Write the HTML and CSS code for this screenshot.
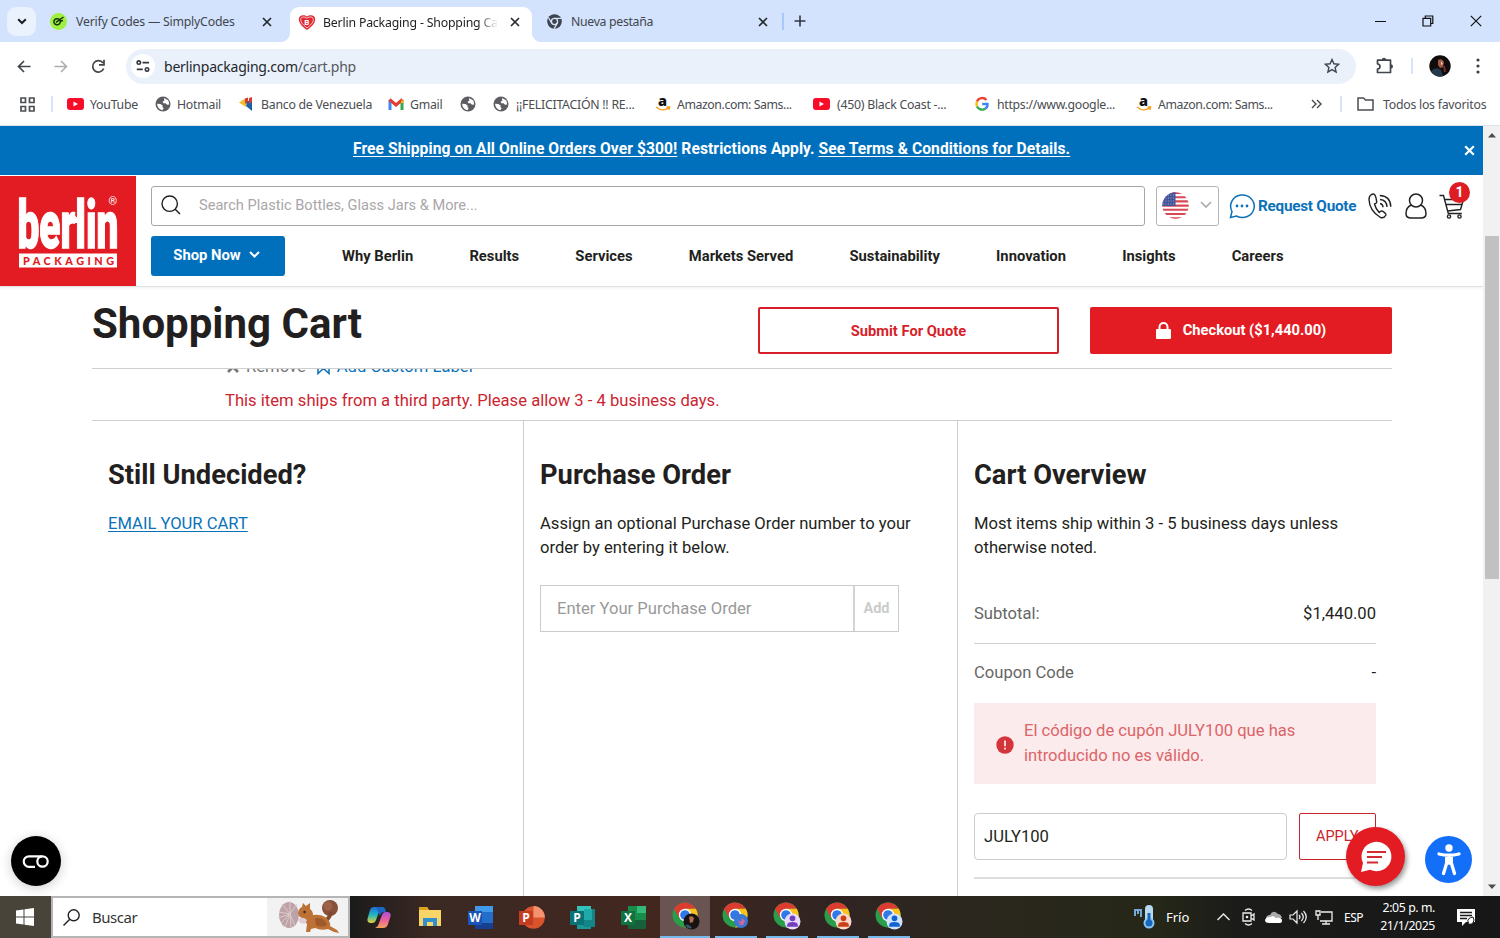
FILE: index.html
```html
<!DOCTYPE html>
<html lang="es">
<head>
<meta charset="utf-8">
<title>Berlin Packaging - Shopping Cart</title>
<link rel="stylesheet" href="styles.css">
</head>
<body>
<svg class="sprite" aria-hidden="true">
  <defs>
    <symbol id="close" viewBox="0 0 10 10"><path d="M1 1l8 8M9 1L1 9" stroke="currentColor" stroke-width="1.7" fill="none"/></symbol>
    <symbol id="globe" viewBox="0 0 16 16"><circle cx="8" cy="8" r="7.500" fill="#5b5d61"/><path d="M9 2l4.500 2.500.7 4-2.200.3-1.500-1.600H8.300L7.600 5.800 9.300 4.800zM2 7.800l3.500.2 2.300 1.800-.4 1.500 1.300.8-1.200 2.200C4.500 13.800 2.300 11.500 2 7.800z" fill="#fff"/></symbol>
    <symbol id="youtube" viewBox="0 0 17 12"><rect width="17" height="12" rx="3" fill="#f80c27"/><path d="M6.500 3.500v5l4.500-2.500z" fill="#fff"/></symbol>
    <symbol id="amazon" viewBox="0 0 16 16"><text x="3" y="9.500" font-family="Open Sans, sans-serif" font-weight="800" font-size="14.500" fill="#111">a</text><path d="M1 11c4 3.500 9 3.500 12.500.8M11.500 11.200l3-.4-.6 3" fill="none" stroke="#f5a11b" stroke-width="1.500"/></symbol>
    <symbol id="chrome" viewBox="0 0 26 26"><circle cx="13" cy="13" r="12.500" fill="#2a9d4b"/><path d="M2.200 6.700A12.500 12.500 0 0 1 23.800 6.700H13L7 16z" fill="#dd3a30"/><path d="M13 6.700h10.800A12.500 12.500 0 0 1 13 25.500l6-9z" fill="#fbc21d"/><circle cx="13" cy="13" r="6.200" fill="#fff"/><circle cx="13" cy="13" r="4.800" fill="#3279e8"/></symbol>
    <symbol id="person" viewBox="0 0 16 16"><circle cx="8" cy="5" r="2.700" fill="currentColor"/><path d="M3 13V11.500q0-3 5-3t5 3V13z" fill="currentColor"/></symbol>
  </defs>
</svg>

<header class="tabstrip">
  <div class="tab-search"><svg width="10" height="7" viewBox="0 0 10 7"><path d="M1.200 1.200L5 5l3.800-3.800" fill="none" stroke="#1c1d20" stroke-width="2"/></svg></div>
  <div class="tab tab-first">
    <svg width="17" height="17" viewBox="0 0 17 17"><circle cx="8.500" cy="8.500" r="8.500" fill="#9fef3f"/><path d="M8.500 6C5.500 5 3.500 7 4 9.500c.5 2.500 4 2.800 5.500 1.200C11 9 10.500 6.500 8.500 6zM6 9.300L13.500 4M9.500 8.500l3.500-1" fill="none" stroke="#173312" stroke-width="1.500"/></svg>
    <span class="tab-title">Verify Codes — SimplyCodes</span>
    <svg class="x" width="10" height="10"><use href="#close"/></svg>
  </div>
  <div class="tab tab-active">
    <svg width="18" height="17" viewBox="0 0 18 17"><path d="M9 16C5 13 .8 9.500.8 5.200.8 1 6 0 9 2.600 12 0 17.200 1 17.200 5.200 17.200 9.500 13 13 9 16z" fill="#df2933"/><path d="M9 14C6 11.500 2.700 9 2.700 5.500 2.700 2.500 6.500 2.200 9 4.300c2.500-2.100 6.300-1.800 6.300 1.200C15.300 9 12 11.500 9 14z" fill="none" stroke="#fff" stroke-width=".7"/><text x="6.300" y="10.500" font-family="Roboto" font-weight="700" font-size="8" fill="#fff">B</text></svg>
    <span class="tab-title fade">Berlin Packaging - Shopping Cart</span>
    <svg class="x" width="10" height="10"><use href="#close"/></svg>
  </div>
  <div class="tab tab-last">
    <svg width="15" height="15" viewBox="0 0 16 16"><circle cx="8" cy="8" r="7.800" fill="#3d434d"/><circle cx="8" cy="8" r="3.300" fill="none" stroke="#d3e3fd" stroke-width="1.400"/><path d="M8 4.600h7M5 9.700L1.500 3.800M11 9.700L7.600 15.600" stroke="#d3e3fd" stroke-width="1.300"/></svg>
    <span class="tab-title">Nueva pestaña</span>
    <svg class="x" width="10" height="10"><use href="#close"/></svg>
  </div>
  <i class="tab-divider"></i>
  <svg class="plus" width="12" height="12" viewBox="0 0 12 12"><path d="M6 .5v11M.5 6h11" stroke="#303741" stroke-width="1.600"/></svg>
  <div class="win-controls">
    <svg width="11" height="12" viewBox="0 0 11 12"><path d="M0 6.500h11" stroke="#111"/></svg>
    <svg width="12" height="12" viewBox="0 0 12 12"><path d="M1 3.300h7.700V11H1zM3.300 3V1h7.500v7.500H9" fill="none" stroke="#111" stroke-width="1.200"/></svg>
    <svg width="12" height="12" viewBox="0 0 12 12"><path d="M.8.800l10.400 10.400M11.200.8L.8 11.200" stroke="#111" stroke-width="1.200"/></svg>
  </div>
</header>

<div class="toolbar">
  <svg class="back" width="14" height="13" viewBox="0 0 14 13"><path d="M13.500 6.500H1.500M7 1L1.500 6.500 7 12" fill="none" stroke="#424549" stroke-width="1.700"/></svg>
  <svg class="fwd" width="14" height="13" viewBox="0 0 14 13"><path d="M.5 6.500h12M7 1l5.500 5.500L7 12" fill="none" stroke="#a9abae" stroke-width="1.500"/></svg>
  <svg class="reload" width="15" height="15" viewBox="0 0 15 15"><path d="M12.700 9.500A5.700 5.700 0 1 1 12 4M13 .8v5H8" fill="none" stroke="#424549" stroke-width="1.700"/></svg>
  <div class="omnibox">
    <span class="site-info"><svg width="14" height="12" viewBox="0 0 14 12"><g fill="none" stroke="#333940" stroke-width="1.600"><circle cx="2.800" cy="2.600" r="1.700"/><path d="M6.500 2.600H13M.8 9.400h6"/><circle cx="11" cy="9.400" r="1.700"/></g></svg></span>
    <span class="url">berlinpackaging.com<span>/cart.php</span></span>
    <svg class="star" width="16" height="16" viewBox="0 0 16 16"><path d="M8 1.500l1.900 4.300 4.700.5-3.500 3.100 1 4.600L8 11.600 3.900 14l1-4.600L1.400 6.300l4.700-.5z" fill="none" stroke="#41464c" stroke-width="1.400"/></svg>
  </div>
  <svg class="puzzle" width="18" height="18" viewBox="0 0 18 18"><path d="M1.500 3.200H14.500V15.500H1.500V12Q4 11.500 4 9.400T1.500 6.800z" fill="none" stroke="#41464c" stroke-width="1.700" stroke-linejoin="round"/><path d="M5.800 3a2.200 2.200 0 0 1 4.400 0zM14.800 7.200a2.200 2.200 0 0 1 0 4.400z" fill="#41464c"/></svg>
  <i class="tool-divider"></i>
  <svg class="avatar" width="22" height="22" viewBox="0 0 22 22"><circle cx="11" cy="11" r="10.700" fill="#100c0c"/><path d="M2 16q5-5 10-1l2 6q-8 2-12-5z" fill="#233a4c"/><path d="M9 5q4-2 6 2l-1 5-3 1-2-3z" fill="#a05b48"/><path d="M12 6l2 3-2 1z" fill="#f0c4ae"/><path d="M15 11l1 6" stroke="#732d24" stroke-width="2"/></svg>
  <svg class="dots" width="4" height="16" viewBox="0 0 4 16"><g fill="#3e4247"><circle cx="2" cy="2" r="1.600"/><circle cx="2" cy="8" r="1.600"/><circle cx="2" cy="14" r="1.600"/></g></svg>
</div>

<nav class="bookmarks">
  <svg class="apps" width="15" height="15" viewBox="0 0 15 15"><path d="M1 1h4.500v4.500H1zM9.500 1H14v4.500H9.500zM1 9.500h4.500V14H1zM9.500 9.500H14V14H9.500z" fill="none" stroke="#4b4e52" stroke-width="1.700"/></svg>
  <i></i>
  <a><svg width="17" height="12"><use href="#youtube"/></svg>YouTube</a>
  <a><svg width="16" height="16"><use href="#globe"/></svg>Hotmail</a>
  <a class="wide"><svg width="15" height="14" viewBox="0 0 15 14"><path d="M0 5.500L7 1v9z" fill="#f3bd27"/><path d="M6 1.500l3-1v6H6z" fill="#db3934"/><path d="M8 5l5-4v13l-6-5z" fill="#1b61a4"/><path d="M10 1l3-1v5l-3 2z" fill="#db3934"/></svg>Banco de Venezuela</a>
  <a><svg width="16" height="12" viewBox="0 0 16 12"><path d="M2 12V2" stroke="#4285f4" stroke-width="3"/><path d="M14 12V2" stroke="#34a853" stroke-width="3"/><path d="M1.500 1.500L8 7l6.500-5.500" fill="none" stroke="#e33c32" stroke-width="3"/><path d="M13 2.500h2.500V5H13z" fill="#fbbc04"/></svg>Gmail</a>
  <a><svg width="16" height="16"><use href="#globe"/></svg></a>
  <a class="wide"><svg width="16" height="16"><use href="#globe"/></svg>¡¡FELICITACIÓN !! RE...</a>
  <a class="tight"><svg width="16" height="16"><use href="#amazon"/></svg>Amazon.com: Sams...</a>
  <a class="wide"><svg width="17" height="12"><use href="#youtube"/></svg>(450) Black Coast -...</a>
  <a class="google"><svg width="14" height="14" viewBox="0 0 14 14"><g fill="none" stroke-width="2.400"><path d="M11.500 3A5.700 5.700 0 0 0 2 4.500" stroke="#ea4335"/><path d="M2 4.500a5.700 5.700 0 0 0 0 5" stroke="#fbbc05"/><path d="M2 9.500a5.700 5.700 0 0 0 8.500 2" stroke="#34a853"/><path d="M10.500 11.500A5 5 0 0 0 12.500 7H7.200" stroke="#4285f4"/></g></svg>https://www.google...</a>
  <a class="tight"><svg width="16" height="16"><use href="#amazon"/></svg>Amazon.com: Sams...</a>
  <svg class="more" width="11" height="10" viewBox="0 0 11 10"><path d="M1 1l4 4-4 4M6 1l4 4-4 4" fill="none" stroke="#44484d" stroke-width="1.400"/></svg>
  <i></i>
  <a class="all"><svg width="18" height="14" viewBox="0 0 18 14"><path d="M1 1h5.500l2 2H16v10H1z" fill="none" stroke="#4b4e52" stroke-width="1.500"/></svg>Todos los favoritos</a>
</nav>

<div class="viewport">
  <main class="page">
    <div class="promo">
      <p><u>Free Shipping on All Online Orders Over $300!</u> Restrictions Apply. <u>See Terms &amp; Conditions for Details.</u></p>
      <svg width="11" height="11" viewBox="0 0 11 11"><path d="M1.200 1.200l8.600 8.600M9.800 1.200L1.200 9.800" stroke="#fff" stroke-width="2.200"/></svg>
    </div>
    <div class="site-header">
      <div class="logo">
        <svg width="136" height="110" viewBox="0 0 136 110">
          <g transform="translate(17.500 72) scale(1 1.640)"><text x="0" y="0" textLength="101" lengthAdjust="spacingAndGlyphs" font-family="Roboto" font-weight="900" font-size="41" fill="#fff" stroke="#fff" stroke-width=".9">berlin</text></g>
          <path d="M66.500 42q5.500-7 11 0v5h-11z" fill="#fff"/>
          <text x="108.500" y="29" font-family="Roboto" font-size="11" fill="#fff">®</text>
          <rect x="19" y="77.500" width="98" height="14" fill="#fff"/>
          <text x="23" y="88.500" textLength="91" font-family="Lato" font-weight="900" font-size="10.800" fill="#df1b23">PACKAGING</text>
        </svg>
      </div>
      <div class="header-rows">
        <div class="row-search">
          <div class="search"><svg width="20" height="20" viewBox="0 0 20 20"><circle cx="8.700" cy="8.700" r="7.700" fill="none" stroke="#222" stroke-width="1.400"/><path d="M14 14l5 5" stroke="#222" stroke-width="1.500"/></svg><span>Search Plastic Bottles, Glass Jars &amp; More...</span></div>
          <div class="country">
            <svg width="27" height="27" viewBox="0 0 27 27"><clipPath id="disc"><circle cx="13.500" cy="13.500" r="13.200"/></clipPath><g clip-path="url(#disc)"><path fill="#fff" d="M0 0h27v27H0z"/><path d="M0 1h27M0 5.200h27M0 9.400h27M0 13.600h27M0 17.800h27M0 22h27M0 26.200h27" stroke="#d94855" stroke-width="2.100"/><path d="M0 0h13.500v14H0z" fill="#46559a"/><path d="M1 3h12M1 6h12M1 9h12M1 12h12" stroke="#aab2d6" stroke-width=".8" stroke-dasharray="1 1.500"/></g></svg>
            <svg width="12" height="8" viewBox="0 0 12 8"><path d="M1 1l5 5 5-5" fill="none" stroke="#aaa" stroke-width="1.600"/></svg>
          </div>
          <div class="quote"><svg width="26" height="26" viewBox="0 0 26 26"><path d="M1.500 24.500l1.500-6A11.800 11.300 0 1 1 7.500 23z" fill="none" stroke="#0b72b9" stroke-width="1.500"/><g fill="#0b72b9"><circle cx="8" cy="13" r="1.400"/><circle cx="13" cy="13" r="1.400"/><circle cx="18" cy="13" r="1.400"/></g></svg><b>Request Quote</b></div>
          <svg class="phone" width="24" height="26" viewBox="0 0 24 26"><g fill="none" stroke="#222" stroke-width="1.400" stroke-linejoin="round"><path d="M3.500 1.500Q1 3 1 6.500 1.500 18 12.500 24.500q3.500 1.200 5.500-2.500.3-1.200-3.500-3.800-1.500-.7-3.300 1.300Q7.500 15.500 6.500 11q2.500-1 2.200-2Q8 2.500 6.200 1.200 5 .8 3.500 1.500z"/><path d="M12 10.500q3 .5 3 3.700M12 6.500q6.800.5 7 7.500M11.800 2.500q10.700.5 11 11.200"/></g></svg>
          <svg class="user" width="22" height="26" viewBox="0 0 22 26"><g fill="none" stroke="#222" stroke-width="1.500"><circle cx="11" cy="7.500" r="6.500"/><path d="M6.200 12Q1 14.500 1 20.500 1 25 6 25h10q5 0 5-4.500 0-6-5.200-8.500"/></g></svg>
          <div class="cart"><svg width="26" height="25" viewBox="0 0 26 25"><g fill="none" stroke="#222" stroke-width="1.400"><path d="M.5 1.500h4l4.800 18h13.500M5.500 5.500h19l-3 10L8.500 17M7 10.500h16"/><circle cx="10" cy="22.500" r="1.600"/><circle cx="20.500" cy="22.500" r="1.600"/></g></svg><b>1</b></div>
        </div>
        <div class="row-nav">
          <div class="shop">Shop Now <svg width="11" height="8" viewBox="0 0 11 8"><path d="M1 1l4.500 4.500L10 1" fill="none" stroke="#fff" stroke-width="2"/></svg></div>
          <nav><a>Why Berlin</a><a>Results</a><a>Services</a><a>Markets Served</a><a>Sustainability</a><a>Innovation</a><a>Insights</a><a>Careers</a></nav>
        </div>
      </div>
    </div>
    <div class="content">
      <div class="title-row">
        <h1>Shopping Cart</h1>
        <div class="btn outline">Submit For Quote</div>
        <div class="btn solid"><svg width="15" height="17" viewBox="0 0 15 17"><path d="M3.500 8V5a4 4 0 0 1 8 0v3" fill="none" stroke="#fff" stroke-width="2"/><rect y="7" width="15" height="10" rx="1" fill="#fff"/></svg>Checkout ($1,440.00)</div>
      </div>
      <div class="item">
        <div class="item-actions">
          <svg class="rm" width="12" height="12" viewBox="0 0 12 12"><path d="M1 1l10 10M11 1L1 11" stroke="#777" stroke-width="2.800"/></svg><span class="remove">Remove</span>
          <svg class="tag" width="13" height="17" viewBox="0 0 13 17"><path d="M1 1h11v14.500l-5.500-5-5.500 5z" fill="none" stroke="#0b72b9" stroke-width="1.500"/></svg><span class="label">Add Custom Label</span>
        </div>
        <p>This item ships from a third party. Please allow 3 - 4 business days.</p>
      </div>
      <div class="columns">
        <section class="c1"><h2>Still Undecided?</h2><a class="email">EMAIL YOUR CART</a></section>
        <section class="c2"><h2>Purchase Order</h2><p>Assign an optional Purchase Order number to your<br>order by entering it below.</p>
          <div class="po"><span>Enter Your Purchase Order</span><b>Add</b></div></section>
        <section class="c3"><h2>Cart Overview</h2><p>Most items ship within 3 - 5 business days unless<br>otherwise noted.</p>
          <div class="line subtotal"><span>Subtotal:</span><em>$1,440.00</em></div>
          <div class="line coupon"><span>Coupon Code</span><em>-</em></div>
          <div class="error"><svg width="18" height="18" viewBox="0 0 18 18"><circle cx="9" cy="9" r="8.700" fill="#d5353a"/><path d="M9 4.500v5.700M9 11.700v1.800" stroke="#fff" stroke-width="1.600"/></svg><span>El código de cupón JULY100 que has<br>introducido no es válido.</span></div>
          <div class="apply-row"><span class="code">JULY100</span><span class="apply">APPLY</span></div>
          <div class="end-rule"></div>
        </section>
      </div>
    </div>
  </main>
  <aside class="scrollbar">
    <svg width="8" height="5" viewBox="0 0 8 5"><path d="M4 0l4 4.500H0z" fill="#4c4c4c"/></svg>
    <div class="thumb"></div>
    <svg class="down" width="8" height="5" viewBox="0 0 8 5"><path d="M4 5L0 .5h8z" fill="#4c4c4c"/></svg>
  </aside>
  <div class="float cookie"><svg width="26" height="13" viewBox="0 0 26 13"><g fill="none" stroke="#fff" stroke-width="2.200"><path d="M12 11.800H6a5.200 5.200 0 0 1 0-10.500h13"/><circle cx="19.500" cy="6.500" r="5.200"/></g></svg></div>
  <div class="float chat"><svg width="32" height="32" viewBox="0 0 32 32"><path d="M1 31l2-9A15 14.700 0 1 1 10 28.800z" fill="#fff"/><path d="M7 11h19M7 16h15M7 21.500h11" stroke="#d32930" stroke-width="2.200"/></svg></div>
  <div class="float access"><svg width="24" height="32" viewBox="0 0 24 32"><circle cx="12" cy="4" r="3.700" fill="#fff"/><path d="M2 10q10 2.500 20 0M12 12v7M9.700 12v7L6.500 29.500M14.300 12v7l3.200 10.500" fill="none" stroke="#fff" stroke-width="3.300" stroke-linecap="round"/></svg></div>
</div>

<footer class="taskbar">
  <div class="start"><svg width="18" height="18" viewBox="0 0 18 18"><path d="M0 2.500L7.500 1.500v7H0zM8.500 1.300L18 0v8.500H8.500zM0 9.500h7.500v7L0 15.500zM8.500 9.500H18V18L8.500 16.700z" fill="#fff"/></svg></div>
  <div class="find">
    <svg class="lens" width="17" height="17" viewBox="0 0 17 17"><circle cx="10.700" cy="6.300" r="5.500" fill="none" stroke="#222" stroke-width="1.400"/><path d="M6.500 10.500l-6 6" stroke="#222" stroke-width="1.500"/></svg><span>Buscar</span>
    <div class="highlight"><svg width="62" height="34" viewBox="0 0 62 34"><ellipse cx="11" cy="15" rx="10" ry="13" fill="#bda3a8"/><path d="M12 14L4 4M12 14L1 12M12 14L3 23M12 14l0-13M12 14l1 13M12 14l7-10M12 14L0 18M12 14l5 12M12 14L7 27" stroke="#dccaca" stroke-width="1"/><circle cx="52" cy="8" r="8" fill="#875039"/><circle cx="50" cy="6" r="4.500" fill="#9c6149"/><path d="M53 12q-1 6-6 9" fill="none" stroke="#80492c" stroke-width="4"/><path d="M20 13q1-5 4-6l1-4 3 3 4-3v6q3 2 3 6 7-1 12 2 6 4 5 9l7 4 2 3-5-1-6-3q-7 2-13-1l-4 1-1 3h-4l1-8-4-6q-4 0-5-5z" fill="#bd7135"/><path d="M37 18q10-1 12 7-6 3-11 0z" fill="#9f592a"/><circle cx="26.500" cy="12" r="1.200" fill="#34242a"/><path d="M20 19q5-3 9 1l-2 4-5-1z" fill="#e1cbd7"/></svg></div>
  </div>
  <div class="apps-row">
    <div><svg width="24" height="23" viewBox="0 0 24 23"><defs><linearGradient id="cp1" x2="0" y2="1"><stop stop-color="#226bd8"/><stop offset=".5" stop-color="#20b7be"/><stop offset="1" stop-color="#e7cf35"/></linearGradient><linearGradient id="cp2" x2="0" y2="1"><stop stop-color="#a951d8"/><stop offset=".5" stop-color="#ee5e9b"/><stop offset="1" stop-color="#f4a35d"/></linearGradient></defs><path d="M7 1h9q-3 1-4 5l-3 8q-1 3-4 3H3q-4-1-2-6L3 4q1-3 4-3z" fill="url(#cp1)"/><path d="M18 6h3q4 1 2 6l-2 6q-1 4-5 4H8q3-1 4-5l3-8q1-3 3-3z" fill="url(#cp2)"/><path d="M9 1h7q2 0 3 5h-2q-3 0-4 4" fill="#1b65c5"/></svg></div>
    <div><svg width="24" height="20" viewBox="0 0 24 20"><path d="M1 0h8l2 3h12v16H1z" fill="#f9d568"/><path d="M1 0h8l2 3H1z" fill="#dba322"/><path d="M5 19v-8h14v8h-4v-4H9v4z" fill="#318fce"/></svg></div>
    <div><svg width="26" height="23" viewBox="0 0 26 23"><path d="M7 0h18v23H7z" fill="#236ecb"/><path d="M7 0h18v6H7z" fill="#3f9be9"/><path d="M7 17h18v6H7z" fill="#163f91"/><path d="M0 5h14v14H0z" fill="#1954b6"/><text x="1.200" y="15.800" class="office-letter">W</text></svg></div>
    <div><svg width="26" height="23" viewBox="0 0 26 23"><circle cx="14.500" cy="11.500" r="11.300" fill="#d9532d"/><path d="M14.500 0a11.500 11.500 0 0 1 11.400 11.500H14.500z" fill="#f59270"/><path d="M0 5h14v14H0z" fill="#c43d21"/><text x="3.300" y="15.800" class="office-letter">P</text></svg></div>
    <div><svg width="26" height="23" viewBox="0 0 26 23"><path d="M7 0h14v23H7z" fill="#1a9697"/><path d="M7 0h14v7H7z" fill="#32c2ba"/><path d="M14 3h11v18H14z" fill="#138487"/><path d="M14 3h8v11h-8z" fill="#1faaa9"/><path d="M0 5h14v14H0z" fill="#0b7277"/><text x="3.300" y="15.800" class="office-letter">P</text></svg></div>
    <div><svg width="26" height="23" viewBox="0 0 26 23"><path d="M7 0h18v23H7z" fill="#198b4b"/><path d="M16 0h9v7h-9z" fill="#34ba78"/><path d="M7 14h18v9H7z" fill="#176039"/><path d="M0 5h14v14H0z" fill="#117241"/><text x="3" y="15.800" class="office-letter">X</text></svg></div>
    <div class="run current"><svg width="28" height="28" viewBox="0 0 28 28"><use href="#chrome" width="26" height="26"/><circle cx="19.500" cy="19.500" r="8" fill="#171112"/><path d="M17 15q3-2 5 1l-1 4-3 1z" fill="#b06b52"/><path d="M13 23q4-2 7 3-4 2-7-3z" fill="#385064"/></svg></div>
    <div class="run"><svg width="28" height="28" viewBox="0 0 28 28"><use href="#chrome" width="26" height="26"/><circle cx="19" cy="19" r="7" fill="#3977d4"/><path d="M16 18l3 2 1-4 3 3-2 4h-3z" fill="#d5659c"/></svg></div>
    <div class="run"><svg width="28" height="28" viewBox="0 0 28 28"><use href="#chrome" width="26" height="26"/><circle cx="19.500" cy="19.500" r="8" fill="#e9dafb"/><g color="#7140bd"><use href="#person" x="11" y="11" width="17" height="17"/></g></svg></div>
    <div class="run"><svg width="28" height="28" viewBox="0 0 28 28"><use href="#chrome" width="26" height="26"/><circle cx="19.500" cy="19.500" r="8" fill="#f8d8cb"/><g color="#cc3f16"><use href="#person" x="11" y="11" width="17" height="17"/></g></svg></div>
    <div class="run"><svg width="28" height="28" viewBox="0 0 28 28"><use href="#chrome" width="26" height="26"/><circle cx="19.500" cy="19.500" r="8" fill="#d1e4ff"/><g color="#1265cf"><use href="#person" x="11" y="11" width="17" height="17"/></g></svg></div>
  </div>
  <div class="tray">
    <svg class="temp" width="21" height="24" viewBox="0 0 21 24"><path d="M0 5h8M1 5v6M4 5v4M7 5v7" stroke="#75a9d7" stroke-width="2"/><path d="M15 4v13" stroke="#b6d9f1" stroke-width="8" stroke-linecap="round"/><circle cx="15" cy="18" r="5.500" fill="#8bc7f0"/><path d="M15 8v10" stroke="#1668bd" stroke-width="3"/><circle cx="15" cy="18" r="3.500" fill="#1668bd"/></svg>
    <span class="cold">Frío</span>
    <svg class="up" width="13" height="8" viewBox="0 0 13 8"><path d="M.5 7l6-6 6 6" fill="none" stroke="#eee" stroke-width="1.400"/></svg>
    <svg class="meet" width="13" height="18" viewBox="0 0 13 18"><path d="M3 2.500q3.500-3 7 0M3 15.500q3.500 3 7 0M1 5h8v8H1zM9 8l3-2v6l-3-2" fill="none" stroke="#eee" stroke-width="1.300"/><circle cx="5" cy="9" r="1.300" fill="#eee"/></svg>
    <svg class="cloud" width="17" height="12" viewBox="0 0 17 12"><path d="M1 8q0-4 4-4 3-6 8-1 3 0 4 4z" fill="#aaa"/><path d="M0 9q1-3 5-3l3-1 3 2q6-1 6 3 0 2-3 2H4q-4 0-4-3z" fill="#fff"/></svg>
    <svg class="sound" width="18" height="14" viewBox="0 0 18 14"><path d="M1 5h3l4-4v12L4 9H1zM10 5q2 2 0 4M12.300 3q4 4 0 8M14.500 1q5.500 6 0 12" fill="none" stroke="#eee" stroke-width="1.200"/></svg>
    <svg class="net" width="18" height="15" viewBox="0 0 18 15"><path d="M1 1h4v4H1zM3 5v5M6 2h11v9H5M11 11v3M7 14h8" fill="none" stroke="#eee" stroke-width="1.300"/></svg>
    <span class="lang">ESP</span>
    <span class="clock">2:05 p. m.<br>21/1/2025</span>
    <svg class="note" width="18" height="17" viewBox="0 0 18 17"><path d="M0 0h18v13h-9l-4 4v-4H0z" fill="#fff"/><path d="M3 3.500h12M3 6.500h12M3 9.500h7" stroke="#1b1b1b" stroke-width="1.300"/><path d="M16 8q-6 1-5 5t5 1q2-3 0-6z" fill="#fff" stroke="#1b1b1b"/></svg>
  </div>
</footer>
</body>
</html>
```
FILE: styles.css
```css
* { box-sizing: border-box; }
body { margin: 0; width: 1500px; height: 938px; overflow: hidden; display: flex; flex-direction: column; background: #fff; font-family: Roboto, sans-serif; color: #231f20; }
svg { display: block; flex: none; overflow: visible; }
h1, h2, p { margin: 0; }
.sprite { width: 0; height: 0; position: absolute; }

.tabstrip { height: 42px; flex: none; display: flex; background: #d3e3fd; font: 12.3px "Noto Sans", sans-serif; color: #41464d; }
.tab-search { width: 29px; height: 29px; margin: 7px 0 0 7px; border-radius: 9px; background: #eaf2fe; display: grid; place-items: center; }
.tab { height: 42px; display: flex; align-items: center; padding-top: 1px; white-space: nowrap; }
.tab-title { letter-spacing: -.25px; margin-left: 8px; flex: none; }
.tab .x { margin-left: auto; color: #26292e; }
.tab-first { width: 222px; margin-left: 14px; }
.tab-first .tab-title { letter-spacing: -.22px; margin-left: 9px; }
.tab-active { width: 242px; height: 36px; margin: 7px 0 0 18px; padding: 0 12px 6px 8px; background: #fff; border-radius: 9px 9px 0 0; color: #222; position: relative; }
.tab-active::before, .tab-active::after { content: ""; position: absolute; bottom: 1px; width: 10px; height: 10px; }
.tab-active::before { left: -10px; background: radial-gradient(circle at 0 0, transparent 10px, #fff 10.500px); }
.tab-active::after { right: -10px; background: radial-gradient(circle at 100% 0, transparent 10px, #fff 10.500px); }
.tab-active .tab-title { margin-left: 7px; letter-spacing: -.18px; }
.fade { width: 174px; overflow: hidden; -webkit-mask-image: linear-gradient(90deg, #000 155px, transparent 175px); mask-image: linear-gradient(90deg, #000 155px, transparent 175px); }
.tab-last { width: 221px; margin-left: 15px; }
.tab-last .tab-title { margin-left: 9px; letter-spacing: -.32px; }
.tab-divider { width: 2px; height: 17px; margin: 13px 0 0 14px; background: #a8c7fa; }
.plus { margin: 15px 0 0 10px; }
.win-controls { display: flex; gap: 36px; margin: 15px 18px 0 auto; }

.toolbar { height: 49px; flex: none; display: flex; align-items: center; padding: 0 20px 1px 17px; background: #fff; }
.fwd { margin-left: 23px; }
.reload { margin-left: 23px; }
.omnibox { width: 1230px; height: 35px; margin-left: 20px; border-radius: 18px; background: #eaf1fb; display: flex; align-items: center; padding: 0 16px 0 5px; }
.site-info { width: 24px; height: 24px; border-radius: 50%; background: #fff; display: grid; place-items: center; }
.url { margin-left: 9px; font: 14px "Noto Sans", sans-serif; letter-spacing: -.23px; color: #24272b; }
.url span { color: #54585d; }
.star { margin-left: auto; }
.puzzle { margin-left: 20px; }
.tool-divider { width: 2px; height: 16px; margin-left: 17px; background: #d5e3fb; }
.avatar { margin-left: 16px; }
.dots { margin-left: auto; }

.bookmarks { height: 34px; flex: none; padding-left: 20px; padding-bottom: 8px; display: grid; grid-template-columns: 31px 16px 88px 84px 149px 72px 33px 162px 158px 162px 161px 174px 30px 17px 140px; align-items: center; background: #fff; font: 12.3px "Noto Sans", sans-serif; letter-spacing: -.25px; color: #4a4d52; }
.bookmarks a { display: flex; align-items: center; gap: 6px; white-space: nowrap; }
.bookmarks .wide { gap: 7px; }
.bookmarks .tight { letter-spacing: -.42px; }
.bookmarks .google { gap: 8px; letter-spacing: -.3px; }
.bookmarks .all { gap: 8px; }
.bookmarks i { width: 2px; height: 16px; background: #d5e3fb; }
.bookmarks .more { margin-left: 1px; }

.viewport { height: 771px; flex: none; display: flex; position: relative; overflow: hidden; border-top: 1px solid #dce3ea; }
.page { width: 1483px; height: 770px; overflow: hidden; }
.promo { height: 49px; background: #0070bd; color: #fff; display: flex; align-items: center; padding: 0 8px 0 353px; font-size: 15.600px; font-weight: 700; }
.promo p { white-space: nowrap; padding-bottom: 3px; letter-spacing: .08px; }
.promo u { text-underline-offset: 2px; }
.promo svg { margin-left: auto; }
.site-header { height: 112px; padding-top: 1px; display: flex; background: #fff; border-bottom: 1px solid #e2e2e2; box-shadow: 0 1px 3px #0001; }
.logo { width: 136px; height: 110px; background: #e31b23; }
.header-rows { padding-left: 15px; }
.row-search { display: flex; align-items: center; height: 40px; margin-top: 10px; }
.search { width: 994px; height: 40px; border: 1px solid #a9a4a8; border-radius: 3px; display: flex; align-items: center; padding: 0 9px 2px; font-size: 14.600px; color: #aaa6a9; }
.search span { margin-left: 18px; }
.country { width: 63px; height: 40px; margin-left: 11px; border: 1px solid #b5b5b5; border-radius: 3px; display: flex; align-items: center; padding: 0 6px 2px 5px; justify-content: space-between; }
.quote { display: flex; align-items: center; gap: 3px; margin-left: 10px; color: #0b72b9; font-size: 15.300px; letter-spacing: -.25px; width: 128px; white-space: nowrap; }
.phone { margin-left: 11px; }
.user { margin-left: 13px; }
.cart { margin-left: 12px; position: relative; }
.cart b { position: absolute; left: 10px; top: -12px; width: 21px; height: 21px; border-radius: 50%; background: #df1b23; color: #fff; font-size: 14px; line-height: 21px; text-align: center; }
.row-nav { display: flex; margin-top: 10px; height: 40px; align-items: center; }
.shop { width: 134px; height: 40px; border-radius: 3px; background: #0070bd; color: #fff; font-size: 14.800px; font-weight: 700; display: flex; align-items: center; justify-content: center; gap: 8px; padding: 0 3px 3px 0; }
.row-nav nav { display: flex; gap: 56.200px; margin-left: 57px; font-weight: 700; font-size: 14.780px; white-space: nowrap; }

.content { width: 1300px; margin-left: 92px; }
.title-row { height: 82px; border-bottom: 1px solid #cfcfcf; display: flex; padding-top: 20px; }
h1 { width: 666px; font-size: 42px; line-height: 34px; font-weight: 700; }
.btn { height: 47px; border-radius: 2px; font-size: 14.700px; font-weight: 700; display: flex; align-items: center; justify-content: center; }
.outline { width: 301px; border: 2px solid #d71f2b; color: #d71f2b; }
.solid { width: 302px; margin-left: 31px; background: #e31b23; color: #fff; gap: 12px; padding-bottom: 1px; }
.item { height: 52px; border-bottom: 1px solid #cfcfcf; padding-left: 133px; overflow: hidden; color: #cc2430; font-size: 16.640px; }
.item-actions { height: 19px; margin-top: -12px; display: flex; align-items: center; color: #777; }
.rm { margin-left: 2px; }
.remove { margin: 0 11px 0 7px; }
.label { margin-left: 7px; color: #0b72b9; }
.item p { margin-top: 15px; line-height: 20px; }
.columns { height: 480px; display: grid; grid-template-columns: 431px 434px 435px; }
section { padding: 38px 16px 0; border-left: 1px solid #cfcfcf; font-size: 16.600px; line-height: 24px; white-space: nowrap; }
.c1 { border-left: 0; }
.c1 .email { display: block; color: #0b72b9; text-decoration: underline; text-underline-offset: 2px; }
h2 { font-size: 27.300px; line-height: 32px; margin-bottom: 21px; }
.po { width: 359px; height: 47px; margin-top: 25px; border: 1px solid #cbcbcb; display: flex; color: #999; line-height: 45px; }
.po span { width: 314px; padding-left: 16px; border-right: 2px solid #d4d4d4; }
.po b { flex: 1; text-align: center; color: #ccc; font-size: 14.500px; }
.line { display: flex; justify-content: space-between; color: #666; width: 402px; }
.line em { font-style: normal; color: #231f20; }
.subtotal { height: 42px; margin-top: 42px; border-bottom: 1px solid #cfcfcf; }
.coupon { height: 42px; padding-top: 17px; }
.error { width: 402px; height: 81px; margin-top: 17px; padding: 0 0 2px 22px; background: #fbebec; display: flex; align-items: center; gap: 10px; color: #db6468; line-height: 25px; }
.error svg { margin-top: 4px; }
.apply-row { display: flex; width: 402px; margin-top: 29px; line-height: 45px; }
.code { width: 313px; height: 47px; border: 1px solid #ccc; border-radius: 4px; padding-left: 9px; }
.apply { width: 77px; height: 47px; margin-left: 12px; border: 1px solid #c9242e; border-radius: 2px; padding-left: 16px; color: #c9242e; font-size: 14.500px; }
.end-rule { width: 402px; height: 2px; margin-top: 17px; background: #ddd; }

.scrollbar { width: 17px; background: #f1f1f1; display: flex; flex-direction: column; align-items: center; padding-top: 7px; }
.thumb { width: 14px; height: 343px; margin-top: 98px; background: #c1c1c1; }
.down { margin: auto 0 7px; }
.float { position: absolute; border-radius: 50%; display: grid; place-items: center; }
.cookie { left: 11px; top: 710px; width: 50px; height: 50px; background: #000; box-shadow: 0 2px 12px #0003; }
.chat { left: 1346px; top: 701px; width: 59px; height: 59px; background: #e31b23; box-shadow: 2px 3px 5px #0006; }
.access { left: 1425px; top: 710px; width: 47px; height: 47px; background: #146ff8; }

.taskbar { height: 42px; flex: none; display: flex; background: linear-gradient(90deg, #1b1b1b 350px, #3b2923 430px, #42271f 650px, #302422 830px, #2b271e 980px, #252718 1160px, #1b1b1a 1240px, #171717); color: #fff; font-family: "Noto Sans", sans-serif; }
.start { width: 51px; padding-right: 1px; display: grid; place-items: center; background: #49443a; }
.find { width: 299px; border: 2px solid #b5b5b5; background: #fff; display: flex; align-items: center; color: #353535; font-size: 15px; }
.find .lens { margin-left: 10px; }
.find span { margin-left: 12px; letter-spacing: -.45px; }
.highlight { width: 81px; height: 38px; margin-left: auto; padding: 2px 0 0 11px; background: #f2f2f2; }
.apps-row { display: flex; margin-left: 3px; }
.apps-row > div { width: 51.100px; display: grid; place-items: center; }
.apps-row .run { border-bottom: 2px solid #76b9ed; margin: 0 4.500px; width: 42px; padding-left: 1px; }
.apps-row .run.current { width: 50px; margin: 0 .5px 0 0; background: #695451; padding-left: 3px; }
.office-letter { font: 700 12px "Open Sans", sans-serif; fill: #fff; }
.tray { margin-left: auto; width: 366px; display: flex; align-items: center; white-space: nowrap; }
.cold { margin-left: 11px; font-size: 13px; width: 25px; }
.up { margin-left: 26px; }
.meet { margin-left: 12px; }
.cloud { margin-left: 10px; }
.sound { margin-left: 7px; }
.net { margin-left: 8px; }
.lang { margin-left: 11px; width: 20px; font-size: 12px; letter-spacing: -.5px; }
.clock { margin-left: 16px; width: 55px; font-size: 12.300px; line-height: 18px; letter-spacing: -.4px; text-align: right; }
.note { margin-left: 22px; }
```
